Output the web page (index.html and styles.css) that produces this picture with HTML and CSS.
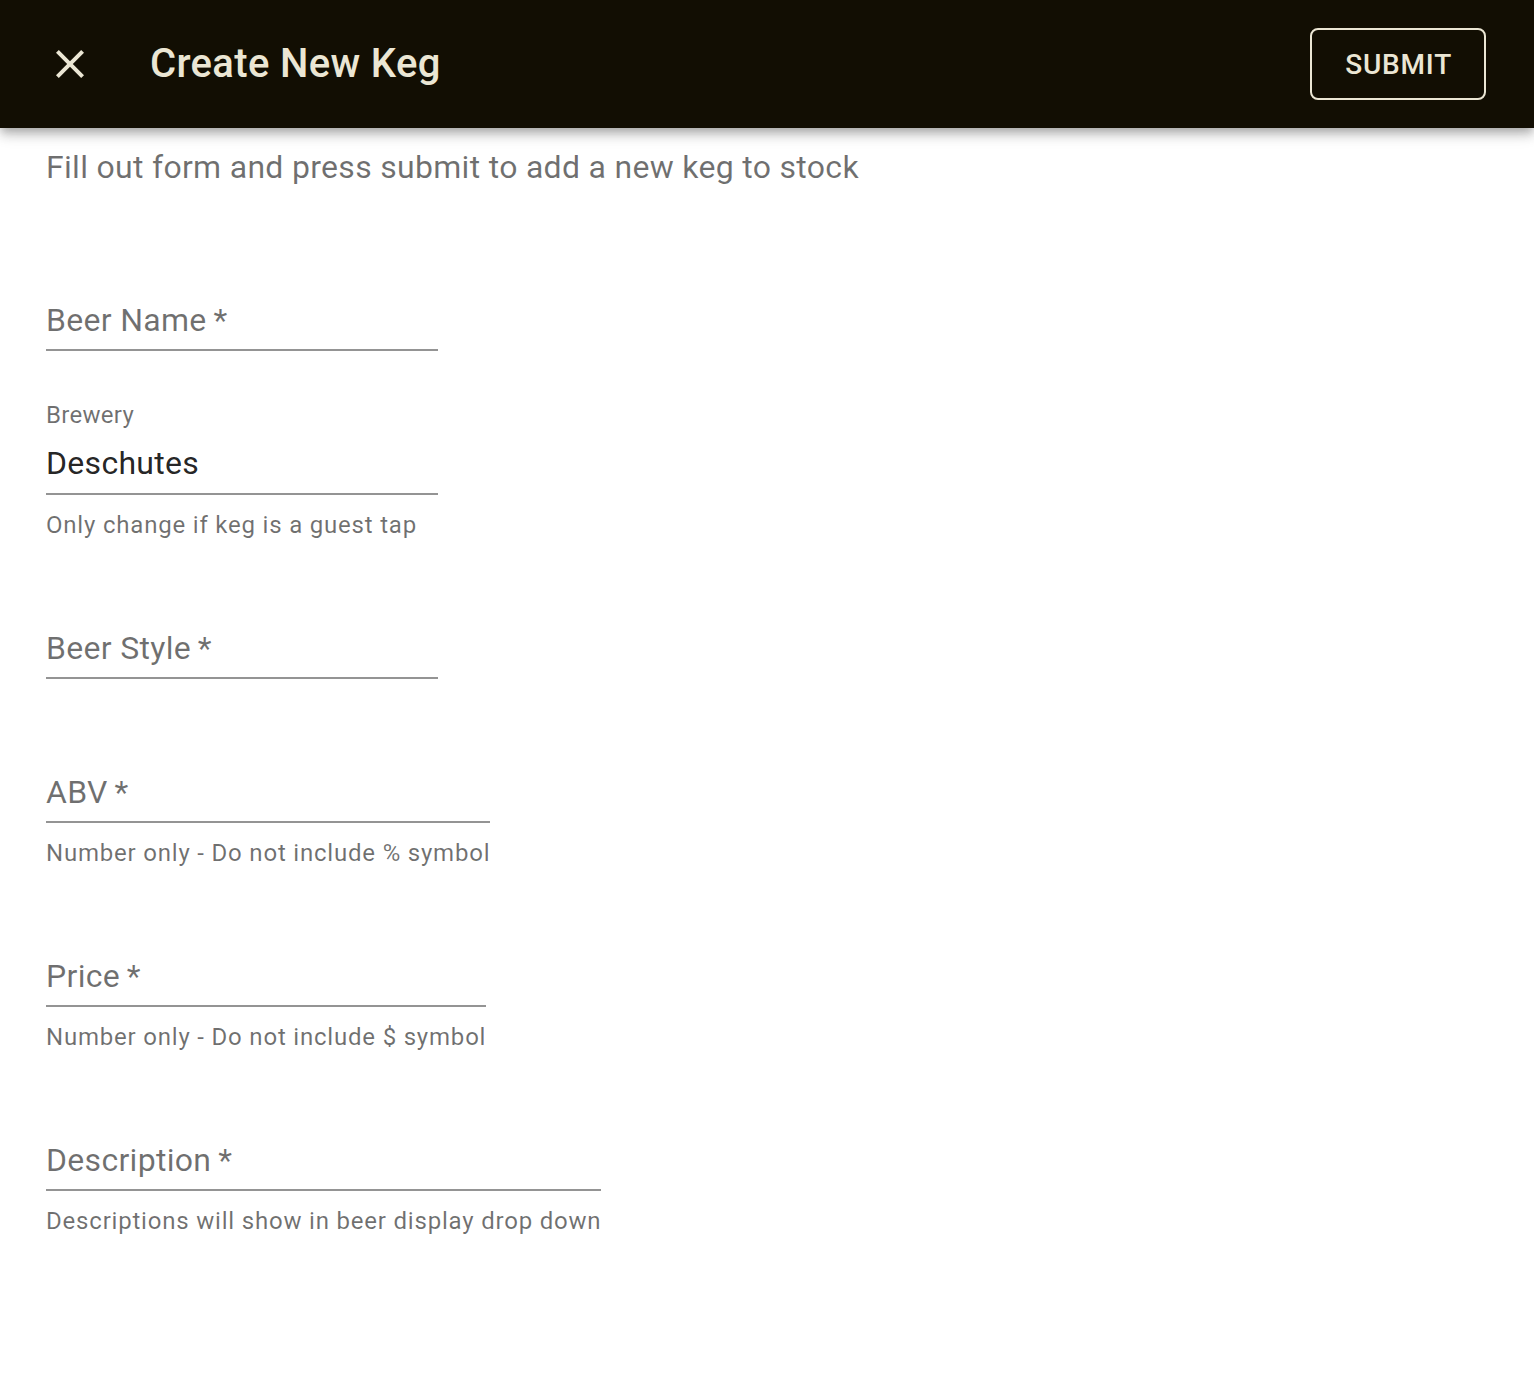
FILE: index.html
```html
<!DOCTYPE html>
<html lang="en">
<head>
<meta charset="utf-8">
<title>Create New Keg</title>
<link rel="stylesheet" href="styles.css">
</head>
<body>
<header class="appbar">
  <button class="icon-btn" aria-label="close">
    <svg viewBox="0 0 24 24" width="48" height="48" aria-hidden="true"><path fill="currentColor" d="M19 6.41 17.59 5 12 10.59 6.41 5 5 6.41 10.59 12 5 17.59 6.41 19 12 13.41 17.59 19 19 17.59 13.41 12z"/></svg>
  </button>
  <h1 class="title">Create New Keg</h1>
  <button class="submit">Submit</button>
</header>
<main class="content">
  <p class="intro">Fill out form and press submit to add a new keg to stock</p>
  <form class="form">
    <div class="field">
      <div class="label-area"></div>
      <div class="input-row placeholder">Beer Name&thinsp;*</div>
    </div>
    <div class="field">
      <div class="label-area"><span class="shrunk">Brewery</span></div>
      <div class="input-row value">Deschutes</div>
      <div class="helper">Only change if keg is a guest tap</div>
    </div>
    <div class="field">
      <div class="label-area"></div>
      <div class="input-row placeholder">Beer Style&thinsp;*</div>
    </div>
    <div class="field">
      <div class="label-area"></div>
      <div class="input-row placeholder">ABV&thinsp;*</div>
      <div class="helper">Number only - Do not include % symbol</div>
    </div>
    <div class="field">
      <div class="label-area"></div>
      <div class="input-row placeholder">Price&thinsp;*</div>
      <div class="helper">Number only - Do not include $ symbol</div>
    </div>
    <div class="field">
      <div class="label-area"></div>
      <div class="input-row placeholder">Description&thinsp;*</div>
      <div class="helper">Descriptions will show in beer display drop down</div>
    </div>
  </form>
</main>
</body>
</html>
```
FILE: styles.css
```css
* { box-sizing: border-box; }
html, body { margin: 0; padding: 0; background: #fff; }
body { font-family: Roboto, "Noto Sans", sans-serif; }

.appbar {
  position: relative;
  z-index: 2;
  height: 128px;
  background: #120e03;
  color: #ebe6d4;
  display: flex;
  align-items: center;
  padding: 0 48px 0 46px;
  box-shadow: 0 4px 8px -2px rgba(0,0,0,0.2), 0 8px 10px 0 rgba(0,0,0,0.14), 0 2px 20px 0 rgba(0,0,0,0.12);
}
.icon-btn {
  width: 48px;
  height: 48px;
  padding: 0;
  border: 0;
  background: none;
  color: #ebe6d4;
  display: flex;
}
.title {
  margin: 0 0 0 56px;
  flex: 1;
  font-size: 40px;
  font-weight: 500;
  letter-spacing: 0.35px;
  line-height: 1.6;
}
.submit {
  height: 72px;
  padding: 0 32px 0 33px;
  border: 2px solid #ebe6d4;
  border-radius: 8px;
  background: transparent;
  color: #ebe6d4;
  font-family: Roboto, "Noto Sans", sans-serif;
  font-size: 28px;
  font-weight: 500;
  letter-spacing: 0.8px;
  text-transform: uppercase;
}

.content { padding: 0 46px; }
.intro {
  margin: 15px 0 32px;
  font-size: 32px;
  line-height: 48px;
  letter-spacing: 0.3px;
  color: rgba(0,0,0,0.56);
}
.form {
  display: flex;
  flex-direction: column;
  align-items: flex-start;
}
.field {
  display: flex;
  flex-direction: column;
  min-width: 392px;
  margin: 32px 0 16px;
}
.label-area {
  height: 32px;
  padding-top: 0;
  line-height: 32px;
}
.shrunk {
  font-size: 24px;
  letter-spacing: 0.3px;
  color: rgba(0,0,0,0.56);
}
.input-row {
  height: 64px;
  padding-top: 9px;
  font-size: 32px;
  line-height: 46px;
  letter-spacing: 0.3px;
  border-bottom: 2px solid rgba(0,0,0,0.42);
  white-space: nowrap;
}
.placeholder { color: rgba(0,0,0,0.56); padding-top: 10px; }
.value { color: rgba(0,0,0,0.87); }
.helper {
  height: 40px;
  padding-top: 20px;
  font-size: 24px;
  line-height: 21px;
  letter-spacing: 0.8px;
  color: rgba(0,0,0,0.56);
  white-space: nowrap;
}
```
